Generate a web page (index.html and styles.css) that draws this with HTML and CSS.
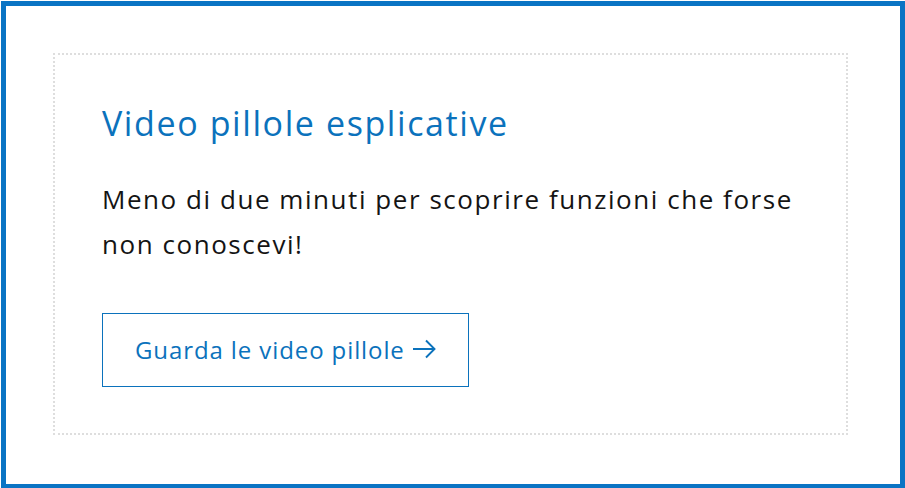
FILE: index.html
```
<!DOCTYPE html>
<html>
<head>
    <meta charset="utf-8" />
    <title>Video pillole</title>
    <link rel="stylesheet" href="styles.css">
</head>
<body>
    <div class="frame">
        <div class="card">
            <h2 class="card-title">Video pillole esplicative</h2>
            <p class="card-text">Meno di due minuti per scoprire funzioni che forse non conoscevi!</p>
            <a class="card-button" href="#">
                <span>Guarda le video pillole</span>
                <svg class="arrow" viewBox="0 0 24 20" width="24" height="20" aria-hidden="true">
                    <path d="M1 10 H22.5 M14 1.5 L22.5 10 L14 18.5" fill="none" stroke="currentColor" stroke-width="1.9" />
                </svg>
            </a>
        </div>
    </div>
</body>
</html>
```

FILE: styles.css
```
/* pagina */
html, body {
    margin: 0;
    background: #fff;
    overflow: hidden;
}

.frame {
    box-sizing: border-box;
    height: 488px;
    margin: 1px 0 0 1px;
    border: 5px solid #0a74c4;
    padding: 47px 52px 49px 47px;
    font-family: "Open Sans", sans-serif;
}

/* riquadro */
.card {
    border: 2px dotted #dedede;
    padding: 46px 47px;
}

.card-title {
    margin: 0;
    color: #0b72bc;
    font-size: 34px;
    font-weight: 400;
    line-height: 44px;
    letter-spacing: 1.6px;
}

.card-text {
    margin: 32px 0 0;
    color: #141414;
    font-size: 26px;
    line-height: 45px;
    letter-spacing: 1.55px;
    max-width: 700px;
}

.card-button {
    display: flex;
    align-items: center;
    gap: 7px;
    width: fit-content;
    height: 74px;
    box-sizing: border-box;
    margin-top: 46px;
    padding: 0 32px 2px 32px;
    border: 1px solid #0b72bc;
    color: #0b72bc;
    font-size: 24px;
    letter-spacing: 0.9px;
    text-decoration: none;
}

.arrow {
    flex: none;
}
```
